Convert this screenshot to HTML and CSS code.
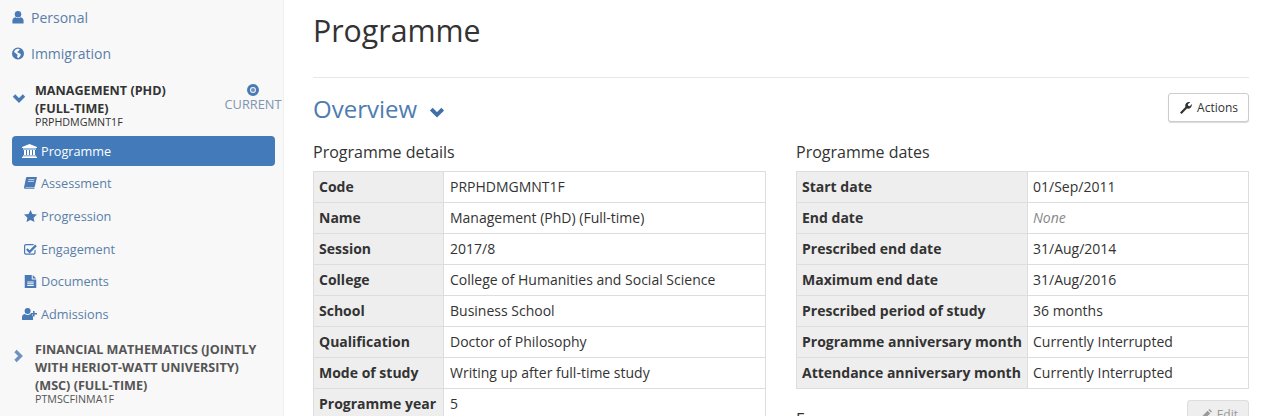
FILE: index.html
```html
<!DOCTYPE html>
<html lang="en">
<head>
    <meta charset="UTF-8">
    <title>Programme</title>
    <link rel="stylesheet" href="styles.css">
</head>
<body>
    <div class="sidebar">
        <a class="top-link">
            <svg class="top-icon" viewBox="0 0 12 14"><circle cx="6" cy="3.6" r="3.5"/><path d="M0 13.4V10.2C0 8 1.8 6.8 3.3 6.6 4.8 7.8 7.2 7.8 8.7 6.6 10.2 6.8 12 8 12 10.2V13.4Z"/></svg>
            Personal
        </a>
        <a class="top-link">
            <svg class="top-icon" viewBox="0 0 12 12"><path fill-rule="evenodd" d="M6 0A6 6 0 1 1 6 12 6 6 0 0 1 6 0ZM3.2 2.2 2 4.4 4 6 5.6 7.2 5 9.6 6.4 10.8 8.4 8.6 8.8 6.6 6.6 5.6 5.2 4.4 6.8 3.2 7.8 1.6 5.4 1.2Z"/></svg>
            Immigration
        </a>

        <div class="prog-head">
            <svg class="chevron" viewBox="0 0 14 9"><path d="M2 1.5 7 6.5 12 1.5"/></svg>
            <div class="prog-title">
                <div class="prog-name">MANAGEMENT (PHD) (FULL-TIME)</div>
                <div class="prog-code">PRPHDMGMNT1F</div>
            </div>
            <div class="prog-status">
                <svg class="status-icon" viewBox="0 0 12 12"><path fill-rule="evenodd" d="M6 0A6 6 0 1 1 6 12 6 6 0 0 1 6 0ZM6 3A3 3 0 1 0 6 9 3 3 0 0 0 6 3Z"/><circle class="status-dot" cx="6" cy="6" r="2"/></svg>
                <span>CURRENT</span>
            </div>
        </div>

        <a class="sub-link active">
            <svg class="sub-icon" viewBox="0 0 15 14"><path d="M7.5 0 15 3V4H0V3ZM1 4.6H14V5.4H1ZM2 6H4V11H2ZM5 6H7V11H5ZM8 6H10V11H8ZM11 6H13V11H11ZM1 11.5H14V12.5H1ZM0 12.8H15V14H0Z"/></svg>
            Programme
        </a>
        <a class="sub-link">
            <svg class="sub-icon" viewBox="0 0 13 12"><path d="M3 0H12.4C13 0 13 .5 12.8 1L10.8 9.6C10.6 10.3 10.2 10.6 9.6 10.6H1.8C1.2 10.6 1.1 11.2 1.6 11.2H10.6V12H1.4C.2 12-.2 10.8.1 10L2 1C2.2.4 2.5 0 3 0Z"/><path class="book-line" d="M4.4 2.6H10.4M3.9 4.4H9.9"/></svg>
            Assessment
        </a>
        <a class="sub-link">
            <svg class="sub-icon" viewBox="0 0 13 12"><path d="M6.5 0 8.4 4 13 4.6 9.6 7.7 10.5 12 6.5 9.9 2.5 12 3.4 7.7 0 4.6 4.6 4Z"/></svg>
            Progression
        </a>
        <a class="sub-link">
            <svg class="sub-icon" viewBox="0 0 13 12"><path fill-rule="evenodd" d="M2 1H10.2L9 2.2H2C1.5 2.2 1.2 2.5 1.2 3V9.8C1.2 10.3 1.5 10.6 2 10.6H9.6C10.1 10.6 10.4 10.3 10.4 9.8V7.6L11.6 6.4V9.8C11.6 11 10.8 11.8 9.6 11.8H2C.8 11.8 0 11 0 9.8V3C0 1.8.8 1 2 1Z"/><path d="M3.6 5.2 5.6 7.2 11.2 1.6 12.8 3.2 5.6 10.4 2 6.8Z"/></svg>
            Engagement
        </a>
        <a class="sub-link">
            <svg class="sub-icon doc" viewBox="0 0 11.5 13"><path fill-rule="evenodd" d="M0 0H7V4.5H11.5V13H0ZM2.5 6.4V7.4H9V6.4ZM2.5 8.2V9.2H9V8.2ZM2.5 10V11H9V10ZM8 0 11.5 3.5H8Z"/></svg>
            Documents
        </a>
        <a class="sub-link">
            <svg class="sub-icon wide" viewBox="0 0 15 12"><circle cx="5.6" cy="3" r="3"/><path d="M0 12V9C0 7.2 1.4 6.2 2.8 6 4.4 7.2 6.8 7.2 8.4 6 9.8 6.2 11 7.2 11 9V12ZM11 3H12.6V5H15V6.6H12.6V8.6H11V6.6H8.8V5H11Z"/></svg>
            Admissions
        </a>

        <div class="prog-head other">
            <svg class="chevron side" viewBox="0 0 9 14"><path d="M1.5 2 6.5 7 1.5 12"/></svg>
            <div class="prog-title wide-title">
                <div class="prog-name">FINANCIAL MATHEMATICS (JOINTLY WITH HERIOT-WATT UNIVERSITY) (MSC) (FULL-TIME)</div>
                <div class="prog-code">PTMSCFINMA1F</div>
            </div>
        </div>
    </div>

    <div class="main">
        <h1>Programme</h1>
        <div class="section-head">
            <h2>Overview
                <svg class="overview-chevron" viewBox="0 0 14 9"><path d="M2 1.5 7 6.5 12 1.5"/></svg>
            </h2>
            <button class="btn">
                <svg class="btn-icon" viewBox="0 0 12 12"><path d="M0 10.4 5.4 5C4.8 3 5.6.6 8.4 0 9.2-.1 9.8 0 10.2.2L7.8 2.2 8.2 3.8 9.8 4.2 11.8 2C12.2 4.8 10 7.4 7 6.6L1.6 12Z"/></svg>
                Actions
            </button>
        </div>

        <div class="columns">
            <div class="col">
                <h3>Programme details</h3>
                <table class="details">
                    <tr><th>Code</th><td>PRPHDMGMNT1F</td></tr>
                    <tr><th>Name</th><td>Management (PhD) (Full-time)</td></tr>
                    <tr><th>Session</th><td>2017/8</td></tr>
                    <tr><th>College</th><td>College of Humanities and Social Science</td></tr>
                    <tr><th>School</th><td>Business School</td></tr>
                    <tr><th>Qualification</th><td>Doctor of Philosophy</td></tr>
                    <tr><th>Mode of study</th><td>Writing up after full-time study</td></tr>
                    <tr><th>Programme year</th><td>5</td></tr>
                </table>
            </div>
            <div class="col">
                <h3>Programme dates</h3>
                <table class="dates">
                    <tr><th>Start date</th><td>01/Sep/2011</td></tr>
                    <tr><th>End date</th><td class="none">None</td></tr>
                    <tr><th>Prescribed end date</th><td>31/Aug/2014</td></tr>
                    <tr><th>Maximum end date</th><td>31/Aug/2016</td></tr>
                    <tr><th>Prescribed period of study</th><td>36 months</td></tr>
                    <tr><th>Programme anniversary month</th><td>Currently Interrupted</td></tr>
                    <tr><th>Attendance anniversary month</th><td>Currently Interrupted</td></tr>
                </table>
                <div class="fees-head">
                    <h3>Fees</h3>
                    <button class="btn disabled">
                        <svg class="btn-icon" viewBox="0 0 12 12"><path d="M0 12 .8 8.6 7.6 1.8 10.2 4.4 3.4 11.2ZM8.4 1 9.4 0 12 2.6 11 3.6Z"/></svg>
                        Edit
                    </button>
                </div>
            </div>
        </div>
    </div>
</body>
</html>
```

FILE: styles.css
```css
html, body {
    height: 416px;
    overflow: hidden;
}

body {
    margin: 0;
    display: flex;
    font-family: 'Open Sans', sans-serif;
    font-size: 14px;
    color: #333;
    background-color: #fff;
}

/* Sidebar */
.sidebar {
    box-sizing: border-box;
    width: 284px;
    flex: none;
    padding: 0 0 0 12px;
    background-color: #f8f8f8;
    border-right: 1px solid #eee;
}

.top-link {
    display: flex;
    align-items: center;
    height: 36px;
    color: #5a7ea8;
    font-size: 14px;
}

.top-link:first-child {
    margin-top: -1px;
}

.top-icon {
    width: 12px;
    height: 13px;
    margin-right: 7px;
    fill: #4a7ab5;
}

.prog-head {
    display: flex;
    margin-top: 11px;
    height: 54px;
}

.chevron {
    width: 14px;
    height: 9px;
    flex: none;
    margin: 12px 9px 0 0;
    fill: none;
    stroke: #4a7ab5;
    stroke-width: 3.4;
}

.chevron.side {
    width: 9px;
    height: 14px;
    margin: 8px 12px 0 2px;
    stroke: #6f93bd;
}

.prog-title {
    width: 165px;
    flex: none;
}

.prog-name {
    font-size: 12.6px;
    font-weight: 700;
    line-height: 18px;
    color: #333;
}

.prog-code {
    font-size: 10.7px;
    line-height: 10px;
    margin-top: -1px;
    color: #333;
}

.prog-status {
    display: flex;
    flex-direction: column;
    align-items: center;
    width: 58px;
    flex: none;
    margin-left: 24px;
    padding-top: 2px;
    font-size: 12.8px;
    line-height: 17px;
    color: #7f95b0;
}

.status-icon {
    width: 12px;
    height: 12px;
    fill: #4a7ab5;
}

.status-dot {
    fill: #6f93bd;
}

.sub-link {
    display: flex;
    align-items: center;
    height: 30px;
    width: 263px;
    margin-bottom: 2.8px;
    padding-left: 10px;
    box-sizing: border-box;
    font-size: 12.7px;
    color: #5a7ea8;
    border-radius: 4px;
}

.sub-link.active {
    background-color: #437ab9;
    color: #fff;
    margin-bottom: 2px;
}

.sub-icon {
    width: 13px;
    height: 12px;
    margin: 0 4px 0 2px;
    fill: #4a7ab5;
}

.sub-icon.wide {
    width: 15px;
    margin: 0 4px 0 0;
}

.sub-icon.doc {
    height: 13px;
}

.book-line {
    fill: none;
    stroke: #f8f8f8;
    stroke-width: 0.7;
}

.active .sub-icon {
    width: 15px;
    height: 14px;
    margin: 0 4px 0 0;
    fill: #fff;
}

.prog-head.other {
    margin-top: 11.5px;
}

.other .prog-name {
    color: #555;
}

.other .prog-code {
    color: #555;
}

.wide-title {
    width: 232px;
}

/* Main content */
.main {
    flex: 1;
    padding: 0 15px 0 29px;
    min-width: 0;
}

h1 {
    margin: 0;
    padding-top: 9px;
    box-sizing: border-box;
    font-size: 30.3px;
    line-height: 44px;
    font-weight: 400;
    border-bottom: 1px solid #e7e7e7;
    height: 78px;
}

.section-head {
    display: flex;
    justify-content: space-between;
    align-items: flex-start;
    height: 63px;
}

h2 {
    margin: 14px 0 0 0;
    font-size: 24px;
    line-height: 34px;
    font-weight: 400;
    color: #4f7cb0;
}

.overview-chevron {
    width: 16px;
    height: 11px;
    margin-left: 6px;
    fill: none;
    stroke: #3f6fa6;
    stroke-width: 3.4;
}

.btn {
    display: flex;
    align-items: center;
    height: 29px;
    margin-top: 15px;
    padding: 0 10px 0 11px;
    font-family: 'Open Sans', sans-serif;
    font-size: 12px;
    color: #333;
    background-color: #fff;
    border: 1px solid #ccc;
    border-radius: 3px;
    box-shadow: 0 1px 1px rgba(0, 0, 0, 0.15);
}

.btn-icon {
    width: 12px;
    height: 12px;
    margin-right: 5px;
    fill: #333;
}

.btn.disabled {
    margin-top: 0;
    padding-left: 12px;
    color: #999;
    background-color: #eee;
    box-shadow: none;
    border-color: #ddd;
}

.btn.disabled .btn-icon {
    fill: #999;
}

.columns {
    display: flex;
    gap: 30px;
}

.col {
    width: 453px;
    flex: none;
}

h3 {
    margin: 0 0 8px 0;
    font-size: 16px;
    line-height: 22px;
    font-weight: 400;
    color: #333;
}

table {
    width: 453px;
    table-layout: fixed;
    border-collapse: collapse;
    font-size: 14px;
}

th, td {
    height: 30px;
    padding: 0 5px;
    border: 1px solid #ddd;
    text-align: left;
    line-height: 20px;
    white-space: nowrap;
}

th {
    font-weight: 700;
    background-color: #eee;
}

.details th {
    width: 119px;
}

.details td {
    padding-left: 6px;
}

.dates th {
    width: 220px;
}

.none {
    font-style: italic;
    color: #888;
}

.fees-head {
    display: flex;
    justify-content: space-between;
    margin-top: 11px;
}

.fees-head h3 {
    margin-top: 8px;
}
```
